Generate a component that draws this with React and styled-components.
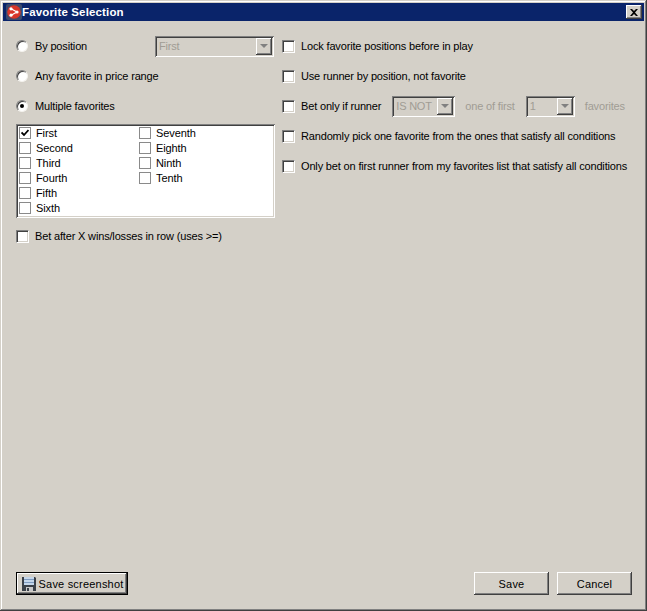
import React from 'react';
import styled, { createGlobalStyle } from 'styled-components';

const GlobalStyle = createGlobalStyle`
  html, body {
    margin: 0;
    padding: 0;
    background: #d4d0c8;
  }
  * {
    box-sizing: border-box;
  }
`;

const Window = styled.div`
  width: 647px;
  height: 611px;
  padding: 3px;
  display: flex;
  flex-direction: column;
  background: #d4d0c8;
  color: #000;
  font-family: "Liberation Sans", Arial, sans-serif;
  font-size: 11px;
  box-shadow:
    inset -1px -1px 0 #404040,
    inset 1px 1px 0 #d4d0c8,
    inset -2px -2px 0 #808080,
    inset 2px 2px 0 #fff;
`;

const TitleBar = styled.div`
  height: 18px;
  flex: none;
  display: flex;
  align-items: center;
  padding: 0 2px 0 3px;
  background: #0a246a;
`;

const TitleText = styled.span`
  margin-left: 0;
  color: #fff;
  font-weight: 700;
  font-size: 11.5px;
  letter-spacing: 0.15px;
`;

const CloseButton = styled.div`
  margin-left: auto;
  width: 16px;
  height: 14px;
  display: flex;
  align-items: center;
  justify-content: center;
  background: #d4d0c8;
  box-shadow:
    inset -1px -1px 0 #404040,
    inset 1px 1px 0 #fff,
    inset -2px -2px 0 #808080;
`;

const Body = styled.div`
  flex: 1;
  display: flex;
  gap: 7px;
  padding: 10px 0 0 13px;
`;

const LeftColumn = styled.div`
  width: 259px;
  flex: none;
  display: flex;
  flex-direction: column;
`;

const RightColumn = styled.div`
  flex: 1;
  min-width: 0;
  display: flex;
  flex-direction: column;
`;

const Row = styled.div`
  height: 30px;
  flex: none;
  display: flex;
  align-items: center;
`;

const Label = styled.span`
  margin-left: ${props => props.$gap || 7}px;
  white-space: nowrap;
  letter-spacing: -0.16px;
  color: ${props => (props.$disabled ? '#a09c94' : '#000')};
`;

const Radio = styled.span`
  width: 12px;
  height: 12px;
  flex: none;
  display: flex;
  align-items: center;
  justify-content: center;
  border-radius: 50%;
  background: #fff;
  border: 1px solid;
  border-color: #808080 #f4f2ee #f4f2ee #808080;
  box-shadow: inset 1px 1px 0 #404040;

  &::after {
    content: '';
    display: ${props => (props.$checked ? 'block' : 'none')};
    width: 4px;
    height: 4px;
    border-radius: 50%;
    background: #000;
  }
`;

const Checkbox = styled.span`
  width: 13px;
  height: 13px;
  flex: none;
  background: #fff;
  border: 1px solid;
  border-color: #808080 #fff #fff #808080;
  box-shadow: inset 1px 1px 0 #404040, inset -1px -1px 0 #d4d0c8;
`;

const ComboBox = styled.div`
  width: ${props => props.$width}px;
  height: 21px;
  flex: none;
  margin-left: ${props => (props.$end ? 'auto' : `${props.$offset || 0}px`)};
  margin-right: ${props => (props.$end ? 1 : 0)}px;
  display: flex;
  align-items: center;
  justify-content: space-between;
  padding: 2px;
  background: #d4d0c8;
  color: #a09c94;
  box-shadow:
    inset 1px 1px 0 #808080,
    inset -1px -1px 0 #fff,
    inset 2px 2px 0 #404040,
    inset -2px -2px 0 #d4d0c8;
`;

const ComboText = styled.span`
  padding-left: 2px;
  letter-spacing: -0.2px;
`;

const ComboArrow = styled.span`
  width: 16px;
  height: 17px;
  display: flex;
  align-items: center;
  justify-content: center;
  background: #d4d0c8;
  box-shadow:
    inset -1px -1px 0 #404040,
    inset 1px 1px 0 #fff,
    inset -2px -2px 0 #808080;

  &::after {
    content: '';
    border-style: solid;
    border-width: 4px 4px 0 4px;
    border-color: #808080 transparent transparent transparent;
  }
`;

const ListBox = styled.div`
  height: 94px;
  margin-top: 3px;
  margin-bottom: 3px;
  flex: none;
  padding: 1px 3px;
  display: grid;
  grid-template-columns: 120px 120px;
  grid-template-rows: repeat(6, 15px);
  grid-auto-flow: column;
  background: #fff;
  box-shadow:
    inset 1px 1px 0 #808080,
    inset -1px -1px 0 #fff,
    inset 2px 2px 0 #404040,
    inset -2px -2px 0 #d4d0c8;
`;

const ListItem = styled.div`
  display: flex;
  align-items: center;
`;

const ListCheck = styled.span`
  width: 12px;
  height: 12px;
  flex: none;
  display: flex;
  align-items: center;
  justify-content: center;
  background: #fff;
  border: 1px solid #8a8a8a;
`;

const ListLabel = styled.span`
  margin-left: 5px;
  letter-spacing: -0.1px;
`;

const Footer = styled.div`
  flex: none;
  height: 37px;
  margin-bottom: 11px;
  padding: 12px 12px 0 13px;
  display: flex;
  align-items: flex-start;
  gap: 8px;
`;

const Button = styled.button`
  width: ${props => props.$width}px;
  height: 23px;
  padding: 0;
  display: flex;
  align-items: center;
  justify-content: center;
  gap: 2px;
  border: ${props => (props.$focused ? '1px solid #000' : 'none')};
  background: #d4d0c8;
  color: #000;
  font-family: inherit;
  font-size: 11px;
  white-space: nowrap;
  letter-spacing: 0.2px;
  box-shadow:
    inset -1px -1px 0 #404040,
    inset 1px 1px 0 #fff,
    inset -2px -2px 0 #808080;
`;

const FooterSpacer = styled.div`
  flex: 1;
`;

const AppIcon = () => (
  <svg width="16" height="16" viewBox="0 0 16 16">
    <rect width="16" height="16" rx="2" fill="#3c4a6c" />
    <circle cx="8" cy="8" r="6.8" fill="#d8362a" />
    <path d="M5 4.8 L11 8 L5 11.2" fill="none" stroke="#fff" strokeWidth="1.2" />
    <circle cx="5" cy="4.8" r="1.6" fill="#fff" />
    <circle cx="11" cy="8" r="1.6" fill="#fff" />
    <circle cx="5" cy="11.2" r="1.6" fill="#fff" />
  </svg>
);

const CloseIcon = () => (
  <svg width="8" height="7" viewBox="0 0 8 7">
    <path d="M0 0h2l2 2 2-2h2L5 3.5 8 7H6L4 5 2 7H0l3-3.5z" fill="#000" />
  </svg>
);

const CheckMark = () => (
  <svg width="8" height="8" viewBox="0 0 8 8">
    <path d="M0.5 3.5 L3 6 L7.5 1" fill="none" stroke="#000" strokeWidth="1.8" />
  </svg>
);

const FloppyIcon = () => (
  <svg width="16" height="16" viewBox="0 0 16 16">
    <path d="M1 1h13l1 1v13H1z" fill="#3a4048" />
    <rect x="3" y="1" width="10" height="8" fill="#c4d6ea" />
    <rect x="3" y="3" width="10" height="1" fill="#7f9cc0" />
    <rect x="3" y="6" width="10" height="1" fill="#7f9cc0" />
    <rect x="5" y="11" width="7" height="4" fill="#c8c8c8" />
    <rect x="6" y="12" width="2" height="3" fill="#3a4048" />
  </svg>
);

const favorites = ['First', 'Second', 'Third', 'Fourth', 'Fifth', 'Sixth', 'Seventh', 'Eighth', 'Ninth', 'Tenth'];

const App = () => (
  <Window>
    <GlobalStyle />
    <TitleBar>
      <AppIcon />
      <TitleText>Favorite Selection</TitleText>
      <CloseButton>
        <CloseIcon />
      </CloseButton>
    </TitleBar>

    <Body>
      <LeftColumn>
        <Row>
          <Radio />
          <Label>By position</Label>
          <ComboBox $width={119} $end>
            <ComboText>First</ComboText>
            <ComboArrow />
          </ComboBox>
        </Row>
        <Row>
          <Radio />
          <Label>Any favorite in price range</Label>
        </Row>
        <Row>
          <Radio $checked />
          <Label>Multiple favorites</Label>
        </Row>
        <ListBox>
          {favorites.map((name, i) => (
            <ListItem key={name}>
              <ListCheck>{i === 0 && <CheckMark />}</ListCheck>
              <ListLabel>{name}</ListLabel>
            </ListItem>
          ))}
        </ListBox>
        <Row>
          <Checkbox />
          <Label $gap={6}>Bet after X wins/losses in row (uses &gt;=)</Label>
        </Row>
      </LeftColumn>

      <RightColumn>
        <Row>
          <Checkbox />
          <Label $gap={6}>Lock favorite positions before in play</Label>
        </Row>
        <Row>
          <Checkbox />
          <Label $gap={6}>Use runner by position, not favorite</Label>
        </Row>
        <Row>
          <Checkbox />
          <Label $gap={6}>Bet only if runner</Label>
          <ComboBox $width={63} $offset={11}>
            <ComboText>IS NOT</ComboText>
            <ComboArrow />
          </ComboBox>
          <Label $gap={10} $disabled>one of first</Label>
          <ComboBox $width={49} $offset={11}>
            <ComboText>1</ComboText>
            <ComboArrow />
          </ComboBox>
          <Label $gap={10} $disabled>favorites</Label>
        </Row>
        <Row>
          <Checkbox />
          <Label $gap={6}>Randomly pick one favorite from the ones that satisfy all conditions</Label>
        </Row>
        <Row>
          <Checkbox />
          <Label $gap={6}>Only bet on first runner from my favorites list that satisfy all conditions</Label>
        </Row>
      </RightColumn>
    </Body>

    <Footer>
      <Button $width={112} $focused>
        <FloppyIcon />
        Save screenshot
      </Button>
      <FooterSpacer />
      <Button $width={75}>Save</Button>
      <Button $width={75}>Cancel</Button>
    </Footer>
  </Window>
);

export default App;
